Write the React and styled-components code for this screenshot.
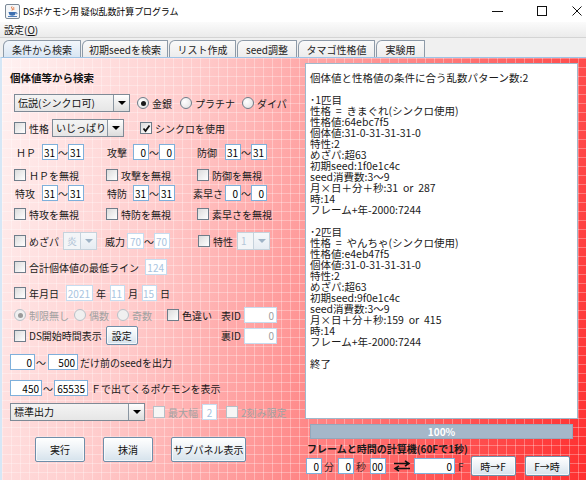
import React from 'react';
import styled, { createGlobalStyle } from 'styled-components';

const FONT = `"Noto Sans CJK JP", "Noto Sans", sans-serif`;

const GlobalStyle = createGlobalStyle`
  html, body { margin: 0; padding: 0; background: #fff; }
  body { font-family: ${FONT}; }
  * { box-sizing: border-box; }
`;

const Window = styled.div`
  width: 586px;
  height: 480px;
  display: flex;
  flex-direction: column;
  overflow: hidden;
  background: #fff;
`;

const TitleBar = styled.div`
  height: 22px;
  flex-shrink: 0;
  display: flex;
  align-items: center;
  padding-left: 5px;
  background: #fff;
`;

const TitleText = styled.span`
  font-size: 9px;
  letter-spacing: -0.1px;
  color: #000;
  margin-left: 3px;
`;

const WinControls = styled.div`
  margin-left: auto;
  display: flex;
  align-items: center;
  padding-right: 4px;
`;

const WinIcon = styled.svg`
  margin-left: ${(p) => p.$ml}px;
  display: block;
`;

const MenuBar = styled.div`
  height: 16px;
  flex-shrink: 0;
  display: flex;
  align-items: center;
  padding-left: 4px;
  background: linear-gradient(#fbfbfb, #ebebeb);
  border-bottom: 1px solid #d4d4d4;
`;

const MenuItem = styled.span`
  font-size: 10px;
  color: #111;
  & u { text-decoration: underline; }
`;

const TabStrip = styled.div`
  height: 19px;
  flex-shrink: 0;
  display: flex;
  align-items: flex-end;
  gap: 1px;
  padding-left: 3px;
  background: #f0f0f0;
`;

const Tab = styled.div`
  width: ${(p) => p.$w}px;
  height: 17px;
  display: flex;
  align-items: center;
  justify-content: center;
  font-size: 10px;
  color: #222;
  border: 1px solid #8d9aa8;
  border-bottom: none;
  border-radius: 6px 1px 0 0;
  background: ${(p) => (p.$active ? 'linear-gradient(#f2f6fb, #d9e6f3)' : 'linear-gradient(#fafafa, #ececec)')};
`;

const Content = styled.div`
  flex: 1;
  display: flex;
  border-top: 1px solid #9ec3e6;
  border-left: 2px solid #d6e7f6;
  background:
    repeating-linear-gradient(90deg, rgba(255, 255, 255, 0.3) 0 1px, transparent 1px 9px),
    repeating-linear-gradient(180deg, rgba(255, 255, 255, 0.3) 0 1px, transparent 1px 9px),
    linear-gradient(105deg, #fff2f2 0%, #ffcccc 28%, #ff9696 52%, #ff5656 78%, #ff3030 100%);
`;

const LeftPane = styled.div`
  width: 303px;
  flex-shrink: 0;
  display: flex;
  flex-direction: column;
  padding-top: 10px;
  padding-right: 28px;
`;

const Row = styled.div`
  display: flex;
  align-items: center;
  height: ${(p) => p.$h || 18}px;
  margin-top: ${(p) => p.$mt || 0}px;
  flex-shrink: 0;
`;

const GridRow = styled.div`
  display: grid;
  grid-template-columns: ${(p) => p.$cols};
  align-items: center;
  height: 18px;
  margin-top: ${(p) => p.$mt || 0}px;
  padding-left: 12px;
  flex-shrink: 0;
`;

const Heading = styled.div`
  height: 18px;
  display: flex;
  align-items: center;
  padding-left: 8px;
  font-size: 10.5px;
  font-weight: bold;
  color: #111;
`;

const Text = styled.span`
  font-size: 10px;
  color: ${(p) => (p.$disabled ? '#a2a2a2' : '#1a1a1a')};
  margin-left: ${(p) => p.$ml || 0}px;
  white-space: nowrap;
  flex-shrink: 0;
`;

const StatLabel = styled.span`
  width: ${(p) => p.$w}px;
  padding-left: ${(p) => p.$pi || 0}px;
  font-size: 10px;
  color: #1a1a1a;
  flex-shrink: 0;
  white-space: nowrap;
`;

const Tilde = styled.span`
  width: ${(p) => p.$w || 10}px;
  text-align: center;
  font-size: 10px;
  color: #1a1a1a;
  flex-shrink: 0;
`;

const Field = styled.span`
  width: ${(p) => p.$w}px;
  height: 16px;
  margin-left: ${(p) => p.$ml || 0}px;
  flex-shrink: 0;
  display: flex;
  align-items: center;
  justify-content: ${(p) => (p.$center ? 'center' : 'flex-end')};
  padding-right: ${(p) => (p.$center ? 0 : 2)}px;
  background: #fff;
  border: 1px solid ${(p) => (p.$disabled ? '#c7dcef' : '#7fb0db')};
  font-size: 10px;
  color: ${(p) => (p.$disabled ? (p.$grey ? '#a0a0a0' : '#a8c4e0') : '#000')};
`;

const StatGroup = styled.div`
  display: flex;
  align-items: center;
`;

const ComboBox = styled.div`
  width: ${(p) => p.$w}px;
  height: 18px;
  margin-left: ${(p) => p.$ml || 0}px;
  flex-shrink: 0;
  display: flex;
  border: 1px solid ${(p) => (p.$disabled ? '#c6d2dc' : '#7e8a96')};
  background: ${(p) => (p.$disabled ? '#f3f5f7' : 'linear-gradient(#f4f4f4, #e6e6e6)')};
`;

const ComboText = styled.span`
  flex: 1;
  padding-left: 3px;
  font-size: 10px;
  line-height: 16px;
  color: ${(p) => (p.$disabled ? '#b4c6d8' : '#111')};
  white-space: nowrap;
  overflow: hidden;
`;

const ComboArrow = styled.span`
  width: 16px;
  display: flex;
  align-items: center;
  justify-content: center;
  border-left: 1px solid ${(p) => (p.$disabled ? '#c6d2dc' : '#8a96a2')};
  background: ${(p) => (p.$disabled ? 'linear-gradient(#f6f8fa, #e6ecf2)' : 'linear-gradient(#ffffff, #dcdcdc)')};
  &::after {
    content: '';
    border-left: 4px solid transparent;
    border-right: 4px solid transparent;
    border-top: 4px solid ${(p) => (p.$disabled ? '#9fb3c6' : '#000')};
  }
`;

const CheckWrap = styled.span`
  display: inline-flex;
  align-items: center;
  margin-left: ${(p) => p.$ml || 0}px;
  flex-shrink: 0;
`;

const Box = styled.span`
  width: 12px;
  height: 12px;
  flex-shrink: 0;
  display: inline-flex;
  align-items: center;
  justify-content: center;
  border: 1px solid ${(p) => (p.$disabled ? '#b6c0c8' : '#6f7d8a')};
  background: ${(p) => (p.$disabled ? '#f6f6f6' : 'linear-gradient(135deg, #dcdcdc, #ffffff)')};
`;

const RadioCircle = styled.span`
  width: 12px;
  height: 12px;
  flex-shrink: 0;
  border-radius: 50%;
  display: inline-flex;
  align-items: center;
  justify-content: center;
  border: 1px solid ${(p) => (p.$disabled ? '#b9c1c8' : '#6f7d8a')};
  background: ${(p) => (p.$disabled ? '#f0f0f0' : 'radial-gradient(circle at 35% 35%, #fff, #dedede)')};
  &::after {
    content: '';
    display: ${(p) => (p.$checked ? 'block' : 'none')};
    width: 5px;
    height: 5px;
    border-radius: 50%;
    background: ${(p) => (p.$disabled ? '#9a9a9a' : '#1a1a1a')};
  }
`;

const Btn = styled.button`
  width: ${(p) => p.$w}px;
  height: ${(p) => p.$h || 20}px;
  margin-left: ${(p) => p.$ml || 0}px;
  flex-shrink: 0;
  padding: 0;
  border: 1px solid #6f8ea9;
  border-radius: 2px;
  background: linear-gradient(#ffffff, #eef3f7 45%, #d5e2ec);
  box-shadow: inset 0 0 0 1px rgba(255, 255, 255, 0.7);
  font-family: ${FONT};
  font-size: 10px;
  color: #111;
  white-space: nowrap;
`;

const IDGroup = styled.div`
  margin-left: auto;
  display: flex;
  align-items: center;
`;

const RightPane = styled.div`
  flex: 1;
  display: flex;
  flex-direction: column;
  padding-right: 8px;
`;

const TextArea = styled.pre`
  margin: 5px 0 0;
  height: 356px;
  padding: 8px 4px;
  background: #fff;
  border: 1px solid #9fb9cc;
  font-family: ${FONT};
  font-size: 10.5px;
  line-height: 11px;
  word-spacing: 2.5px;
  color: #1a1a1a;
  white-space: pre;
  overflow: hidden;
`;

const Progress = styled.div`
  margin: 5px 5px 0;
  height: 15px;
  display: flex;
  align-items: center;
  justify-content: center;
  background: #a5b7c9;
  border: 1px solid #93a8bc;
  color: #fff;
  font-size: 10px;
  font-weight: bold;
`;

const CalcLabel = styled.div`
  margin: 3px 0 0 2px;
  height: 12px;
  display: flex;
  align-items: center;
  font-size: 10px;
  font-weight: bold;
  color: #1a1a1a;
  white-space: nowrap;
`;

const CalcRow = styled.div`
  display: flex;
  align-items: center;
  height: 20px;
  margin-top: 2px;
`;

const Unit = styled.span`
  margin-left: ${(p) => p.$ml || 2}px;
  font-size: 10px;
  color: #3a2626;
  flex-shrink: 0;
`;

const SwapIcon = styled.svg`
  margin-left: 7px;
  flex-shrink: 0;
  display: block;
`;

const Check = ({ label, checked, disabled, ml }) => (
  <CheckWrap $ml={ml}>
    <Box $disabled={disabled}>
      {checked && (
        <svg width="9" height="9" viewBox="0 0 9 9">
          <path d="M1.5 4.5 L3.5 7 L7.5 1.5" stroke="#111" strokeWidth="1.8" fill="none" />
        </svg>
      )}
    </Box>
    <Text $ml={3} $disabled={disabled}>{label}</Text>
  </CheckWrap>
);

const Radio = ({ label, checked, disabled, ml }) => (
  <CheckWrap $ml={ml}>
    <RadioCircle $checked={checked} $disabled={disabled} />
    <Text $ml={3} $disabled={disabled}>{label}</Text>
  </CheckWrap>
);

const Combo = ({ value, w, ml, disabled }) => (
  <ComboBox $w={w} $ml={ml} $disabled={disabled}>
    <ComboText $disabled={disabled}>{value}</ComboText>
    <ComboArrow $disabled={disabled} />
  </ComboBox>
);

const Stat = ({ label, lw, pi, a, b }) => (
  <StatGroup>
    <StatLabel $w={lw} $pi={pi}>{label}</StatLabel>
    <Field $w={16}>{a}</Field>
    <Tilde>～</Tilde>
    <Field $w={16}>{b}</Field>
  </StatGroup>
);

const JavaIcon = () => (
  <svg width="15" height="15" viewBox="0 0 15 15">
    <rect x="0.5" y="0.5" width="14" height="14" rx="1.5" fill="#f4f6f8" stroke="#7a8896" />
    <path d="M7 2.5 C5.5 4 8.5 4.5 7 6.5" stroke="#e3601e" strokeWidth="1" fill="none" />
    <path d="M9 3 C8 4 9.5 4.5 8.6 6" stroke="#e3601e" strokeWidth="0.8" fill="none" />
    <path d="M3.5 8 L11 8 L10 11 Q7.3 12.5 4.5 11 Z" fill="#3d6fb0" />
    <path d="M10.8 8.6 Q13 8.8 11.6 10.2" stroke="#3d6fb0" strokeWidth="0.9" fill="none" />
    <path d="M3 12.5 L12 12.5" stroke="#3d6fb0" strokeWidth="0.9" />
  </svg>
);

const resultText = `個体値と性格値の条件に合う乱数パターン数:2

･1匹目
性格 = きまぐれ(シンクロ使用)
性格値:64ebc7f5
個体値:31-0-31-31-31-0
特性:2
めざパ:超63
初期seed:1f0e1c4c
seed消費数:3～9
月×日＋分＋秒:31 or 287
時:14
フレーム+年-2000:7244

･2匹目
性格 = やんちゃ(シンクロ使用)
性格値:e4eb47f5
個体値:31-0-31-31-31-0
特性:2
めざパ:超63
初期seed:9f0e1c4c
seed消費数:3～9
月×日＋分＋秒:159 or 415
時:14
フレーム+年-2000:7244

終了`;

const tabs = [
  ['条件から検索', 78, true],
  ['初期seedを検索', 86],
  ['リスト作成', 67],
  ['seed調整', 60],
  ['タマゴ性格値', 77],
  ['実験用', 49],
];

export default function App() {
  return (
    <>
      <GlobalStyle />
      <Window>
        <TitleBar>
          <JavaIcon />
          <TitleText>DSポケモン用 疑似乱数計算プログラム</TitleText>
          <WinControls>
            <WinIcon $ml={0} width="11" height="10" viewBox="0 0 11 10">
              <path d="M0 5.5 H11" stroke="#111" strokeWidth="1" />
            </WinIcon>
            <WinIcon $ml={34} width="10" height="10" viewBox="0 0 10 10">
              <rect x="0.5" y="0.5" width="9" height="9" fill="none" stroke="#111" strokeWidth="1" />
            </WinIcon>
            <WinIcon $ml={25} width="10" height="10" viewBox="0 0 10 10">
              <path d="M0.5 0.5 L9.5 9.5 M9.5 0.5 L0.5 9.5" stroke="#111" strokeWidth="1" />
            </WinIcon>
          </WinControls>
        </TitleBar>
        <MenuBar>
          <MenuItem>設定(<u>O</u>)</MenuItem>
        </MenuBar>
        <TabStrip>
          {tabs.map(([t, w, a]) => (
            <Tab key={t} $w={w} $active={a}>{t}</Tab>
          ))}
        </TabStrip>
        <Content>
          <LeftPane>
            <Heading>個体値等から検索</Heading>
            <Row $mt={8}>
              <Combo value="伝説(シンクロ可)" w={116} ml={12} />
              <Radio label="金銀" checked ml={7} />
              <Radio label="プラチナ" ml={8} />
              <Radio label="ダイパ" ml={7} />
            </Row>
            <Row $mt={7}>
              <Check label="性格" ml={12} />
              <Combo value="いじっぱり" w={72} ml={3} />
              <Check label="シンクロを使用" checked ml={16} />
            </Row>
            <GridRow $mt={6} $cols="92px 87px auto">
              <Stat label="ＨＰ" lw={28} pi={2} a="31" b="31" />
              <Stat label="攻撃" lw={27} pi={1} a="0" b="0" />
              <Stat label="防御" lw={32} pi={4} a="31" b="31" />
            </GridRow>
            <GridRow $mt={5} $cols="92px 91px auto">
              <Check label="ＨＰを無視" />
              <Check label="攻撃を無視" />
              <Check label="防御を無視" />
            </GridRow>
            <GridRow $mt={0} $cols="92px 87px auto">
              <Stat label="特攻" lw={28} pi={1} a="31" b="31" />
              <Stat label="特防" lw={27} pi={1} a="31" b="31" />
              <Stat label="素早さ" lw={32} a="0" b="0" />
            </GridRow>
            <GridRow $mt={3} $cols="92px 91px auto">
              <Check label="特攻を無視" />
              <Check label="特防を無視" />
              <Check label="素早さを無視" />
            </GridRow>
            <Row $mt={9}>
              <Check label="めざパ" ml={12} />
              <Combo value="炎" w={34} ml={4} disabled />
              <Text $ml={8}>威力</Text>
              <Field $w={17} $ml={2} $disabled>70</Field>
              <Tilde>～</Tilde>
              <Field $w={16} $disabled>70</Field>
              <Check label="特性" ml={28} />
              <Combo value="1" w={33} ml={4} disabled />
            </Row>
            <Row $mt={8}>
              <Check label="合計個体値の最低ライン" ml={12} />
              <Field $w={22} $ml={6} $disabled>124</Field>
            </Row>
            <Row $mt={8}>
              <Check label="年月日" ml={12} />
              <Field $w={27} $ml={7} $disabled>2021</Field>
              <Text $ml={3}>年</Text>
              <Field $w={15} $ml={4} $disabled>11</Field>
              <Text $ml={3}>月</Text>
              <Field $w={15} $ml={4} $disabled>15</Field>
              <Text $ml={3}>日</Text>
            </Row>
            <Row $mt={4}>
              <Radio label="制限無し" checked disabled ml={12} />
              <Radio label="偶数" disabled ml={5} />
              <Radio label="奇数" disabled ml={8} />
              <Check label="色違い" ml={15} />
              <IDGroup>
                <StatLabel $w={23}>表ID</StatLabel>
                <Field $w={33} $disabled $grey>0</Field>
              </IDGroup>
            </Row>
            <Row $mt={2} $h={19}>
              <Check label="DS開始時間表示" ml={12} />
              <Btn $w={32} $h={19} $ml={4}>設定</Btn>
              <IDGroup>
                <StatLabel $w={23}>裏ID</StatLabel>
                <Field $w={33} $disabled $grey>0</Field>
              </IDGroup>
            </Row>
            <Row $mt={8}>
              <Field $w={25} $ml={8}>0</Field>
              <Tilde $w={12}>～</Tilde>
              <Field $w={30} $ml={1}>500</Field>
              <Text $ml={2}>だけ前のseedを出力</Text>
            </Row>
            <Row $mt={8}>
              <Field $w={32} $ml={8}>450</Field>
              <Tilde $w={12}>～</Tilde>
              <Field $w={34}>65535</Field>
              <Text $ml={3}>Ｆで出てくるポケモンを表示</Text>
            </Row>
            <Row $mt={6}>
              <Combo value="標準出力" w={135} ml={8} />
              <Check label="最大幅" disabled ml={8} />
              <Field $w={15} $ml={4} $disabled $center>2</Field>
              <Check label="2刻み限定" disabled ml={9} />
            </Row>
            <Row $mt={16} $h={25}>
              <Btn $w={50} $h={25} $ml={33}>実行</Btn>
              <Btn $w={50} $h={25} $ml={18}>抹消</Btn>
              <Btn $w={75} $h={25} $ml={18}>サブパネル表示</Btn>
            </Row>
          </LeftPane>
          <RightPane>
            <TextArea>{resultText}</TextArea>
            <Progress>100%</Progress>
            <CalcLabel>フレームと時間の計算機(60Fで1秒)</CalcLabel>
            <CalcRow>
              <Field $w={16} $ml={1}>0</Field>
              <Unit>分</Unit>
              <Field $w={16} $ml={4}>0</Field>
              <Unit>秒</Unit>
              <Field $w={16} $ml={4}>00</Field>
              <SwapIcon width="18" height="12" viewBox="0 0 18 12">
                <path d="M1 3.5 H15 M12 0.8 L16 3.5 L12 6.2" stroke="#111" strokeWidth="1.6" fill="none" />
                <path d="M17 8.5 H3 M6 5.8 L2 8.5 L6 11.2" stroke="#111" strokeWidth="1.6" fill="none" />
              </SwapIcon>
              <Field $w={41} $ml={3}>0</Field>
              <Unit $ml={3}>F</Unit>
              <Btn $w={45} $ml={7}>時→F</Btn>
              <Btn $w={45} $ml={9}>F→時</Btn>
            </CalcRow>
          </RightPane>
        </Content>
      </Window>
    </>
  );
}
